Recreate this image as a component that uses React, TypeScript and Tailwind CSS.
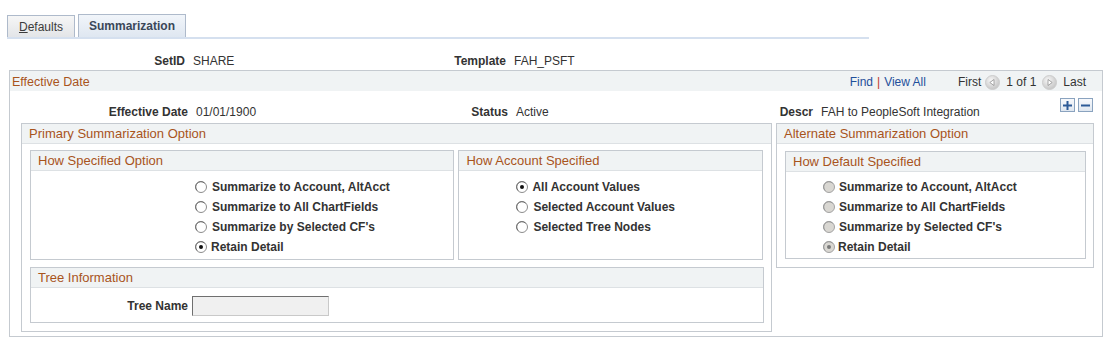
import React from "react";

const font = "font-['Liberation_Sans',Arial,sans-serif]";

const Radio = ({ checked = false, disabled = false }: { checked?: boolean; disabled?: boolean }) => (
  <svg width="12" height="12" viewBox="0 0 12 12" className="shrink-0">
    <circle cx="6" cy="6" r="5.5" fill={disabled ? "#d9d7d2" : "#ffffff"} stroke={disabled ? "#a3a3a3" : "#8c8c8c"} />
    <path d="M2.2 9.5 A5 5 0 0 1 9.5 2.2" fill="none" stroke={disabled ? "#9a9a9a" : "#6f6f6f"} strokeWidth="1" />
    {checked && <circle cx="6" cy="6" r="2" fill={disabled ? "#7a7a7a" : "#111111"} />}
  </svg>
);

const NavArrow = ({ dir }: { dir: "left" | "right" }) => (
  <svg width="15" height="15" viewBox="0 0 15 15">
    <defs>
      <radialGradient id={`g-${dir}`} cx="0.4" cy="0.35" r="0.7">
        <stop offset="0" stopColor="#f7f7f7" />
        <stop offset="1" stopColor="#c2c2c2" />
      </radialGradient>
    </defs>
    <circle cx="7.5" cy="7.5" r="7" fill={`url(#g-${dir})`} stroke="#cdcdcd" />
    {dir === "left" ? (
      <path d="M4.8 7.5 L9 4.5 L9 10.5 Z" fill="#ffffff" stroke="#8f8f8f" strokeWidth="0.8" />
    ) : (
      <path d="M10.2 7.5 L6 4.5 L6 10.5 Z" fill="#ffffff" stroke="#8f8f8f" strokeWidth="0.8" />
    )}
  </svg>
);

const GroupBox = ({
  title,
  className,
  children,
}: {
  title: string;
  className: string;
  children?: React.ReactNode;
}) => (
  <div className={`border border-[#c5cad0] ${className}`}>
    <div className="h-[20px] bg-[#f0f3f4] border-b border-[#dde1e4] pl-[7px] pt-[1px] flex items-center text-[13px] text-[#a8541c]">
      {title}
    </div>
    {children}
  </div>
);

const RadioRow = ({
  label,
  checked,
  disabled,
  gap = "gap-[5px]",
}: {
  label: string;
  checked?: boolean;
  disabled?: boolean;
  gap?: string;
}) => (
  <div className={`h-[20px] flex items-center ${gap}`}>
    <Radio checked={checked} disabled={disabled} />
    <span className="font-bold">{label}</span>
  </div>
);

const summarizeOptions = [
  "Summarize to Account, AltAcct",
  "Summarize to All ChartFields",
  "Summarize by Selected CF's",
  "Retain Detail",
];

export default function App() {
  return (
    <div className={`w-[1114px] h-[348px] bg-white text-[12px] text-[#333] ${font}`}>
      {/* tabs */}
      <div className="pt-[14px] pl-[7px]">
        <div className="flex items-end gap-[3px]">
          <div className="w-[68px] h-[22px] border border-[#aebacb] border-b-0 bg-gradient-to-b from-[#f6f6f6] to-[#e3e5e8] flex items-center justify-center text-[#3b3b3b]">
            <span>
              <span className="underline">D</span>efaults
            </span>
          </div>
          <div className="w-[108px] h-[23px] border border-[#aebacb] border-b-0 bg-gradient-to-b from-[#f1f5fa] to-[#dfe7f1] flex items-center justify-center font-bold text-[#3a4758]">
            Summarization
          </div>
        </div>
        <div className="w-[862px] h-[2px] bg-[#d5e0ef]" />
      </div>

      {/* setid row */}
      <div className="mt-[14px] h-[16px] flex items-center">
        <div className="w-[185px] text-right font-bold">SetID</div>
        <div className="ml-[8px] w-[199px]">SHARE</div>
        <div className="w-[114px] text-right font-bold">Template</div>
        <div className="ml-[8px]">FAH_PSFT</div>
      </div>

      {/* effective date scroll area */}
      <div className="mt-[1px] ml-[9px] w-[1094px] h-[267px] border border-[#c5cad0]">
        <div className="h-[20px] bg-[#f0f3f4] flex items-center justify-between pl-[2px] pr-[16px] pt-[2px]">
          <span className="text-[#a8541c] text-[12.5px]">Effective Date</span>
          <div className="flex items-center">
            <span className="text-[#1f4f9b]">Find</span>
            <span className="mx-[4px] text-[#c0392b]">|</span>
            <span className="text-[#1f4f9b]">View All</span>
            <span className="ml-[32px] mr-[4px]">First</span>
            <NavArrow dir="left" />
            <span className="mx-[6px]">1 of 1</span>
            <NavArrow dir="right" />
            <span className="ml-[6px]">Last</span>
          </div>
        </div>

        <div className="h-[32px] flex justify-between items-start">
          <div className="mt-[13px] h-[16px] flex items-center">
            <div className="w-[178px] text-right font-bold">Effective Date</div>
            <div className="ml-[8px] w-[200px]">01/01/1900</div>
            <div className="w-[112px] text-right font-bold">Status</div>
            <div className="ml-[8px] w-[200px]">Active</div>
            <div className="w-[97px] text-right font-bold">Descr</div>
            <div className="ml-[8px]">FAH to PeopleSoft Integration</div>
          </div>
          <div className="mt-[7px] mr-[9px] flex gap-[3px]">
            <div className="w-[15px] h-[14px] border border-[#8aa3bf] bg-gradient-to-b from-[#f7f9fc] to-[#dfe7f0] flex items-center justify-center">
              <svg width="9" height="9" viewBox="0 0 9 9">
                <rect x="3.5" y="0" width="2" height="9" fill="#2c5a97" />
                <rect x="0" y="3.5" width="9" height="2" fill="#2c5a97" />
              </svg>
            </div>
            <div className="w-[15px] h-[14px] border border-[#8aa3bf] bg-gradient-to-b from-[#f7f9fc] to-[#dfe7f0] flex items-center justify-center">
              <svg width="9" height="9" viewBox="0 0 9 9">
                <rect x="0" y="3.5" width="9" height="2" fill="#2c5a97" />
              </svg>
            </div>
          </div>
        </div>

        <div className="pl-[11px] flex gap-[4px] items-start">
          {/* primary */}
          <GroupBox title="Primary Summarization Option" className="w-[751px] h-[209px]">
            <div className="px-[8px] pt-[6px]">
              <div className="flex gap-[4px]">
                <GroupBox title="How Specified Option" className="w-[425px] h-[110px]">
                  <div className="pt-[6px] pl-[164px]">
                    {summarizeOptions.map((o, i) => (
                      <RadioRow key={o} label={o} checked={i === 3} gap={i === 3 ? "gap-[4px]" : "gap-[5px]"} />
                    ))}
                  </div>
                </GroupBox>
                <GroupBox title="How Account Specified" className="w-[305px] h-[110px]">
                  <div className="pt-[6px] pl-[57px]">
                    <RadioRow label="All Account Values" checked gap="gap-[4px]" />
                    <RadioRow label="Selected Account Values" />
                    <RadioRow label="Selected Tree Nodes" />
                  </div>
                </GroupBox>
              </div>
              <GroupBox title="Tree Information" className="mt-[7px] w-[734px] h-[56px]">
                <div className="mt-[8px] h-[20px] flex items-center">
                  <div className="w-[157px] text-right font-bold">Tree Name</div>
                  <div className="ml-[4px] w-[137px] h-[20px] bg-[#f0f0f0] border border-[#c9c9c9] border-t-[#6f6f6f] border-l-[#6f6f6f]" />
                </div>
              </GroupBox>
            </div>
          </GroupBox>

          {/* alternate */}
          <GroupBox title="Alternate Summarization Option" className="w-[318px] h-[145px]">
            <div className="px-[8px] pt-[7px]">
              <GroupBox title="How Default Specified" className="w-[301px] h-[108px]">
                <div className="pt-[5px] pl-[37px]">
                  {summarizeOptions.map((o, i) => (
                    <RadioRow key={o} label={o} checked={i === 3} disabled gap={i === 3 ? "gap-[3px]" : "gap-[4px]"} />
                  ))}
                </div>
              </GroupBox>
            </div>
          </GroupBox>
        </div>
      </div>
    </div>
  );
}
